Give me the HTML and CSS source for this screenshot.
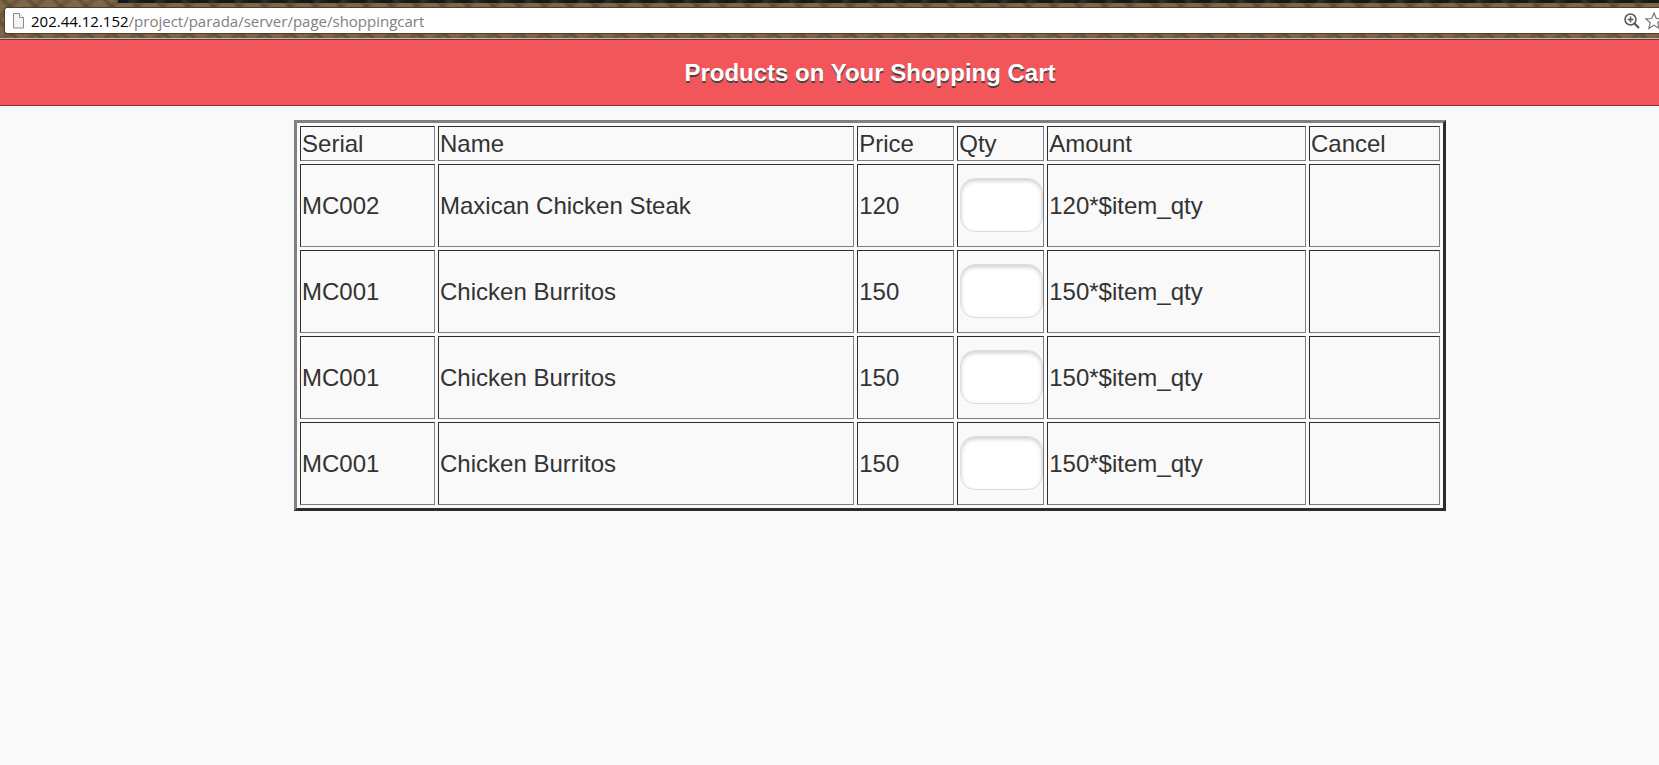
FILE: index.html
```html
<!DOCTYPE html>
<html lang="en">
<head>
<meta charset="utf-8">
<title>Shopping Cart</title>
<link rel="stylesheet" href="styles.css">
</head>
<body>
<div class="toolbar">
  <div class="tabstrip"></div>
  <div class="omnibox">
    <svg class="page-icon" width="13" height="16" viewBox="0 0 13 16"><path d="M1.500 .5h6l4 4v10.500h-10z" fill="#f4f4f4" stroke="#8c8c8c"/><path d="M7.500 .5v4h4" fill="#fff" stroke="#8c8c8c"/></svg>
    <div class="url"><span class="host">202.44.12.152</span>/project/parada/server/page/shoppingcart</div>
    <button class="tool" aria-label="Zoom"><svg width="16" height="16" viewBox="0 0 16 16" fill="none" stroke="#555"><circle cx="6.500" cy="6.500" r="5.500" stroke-width="1.500"/><path d="M3.500 6.500h6M6.500 3.500v6" stroke-width="1.500"/><path d="M10.500 10.500l4.500 4.500" stroke-width="2.200"/></svg></button>
    <button class="tool star" aria-label="Bookmark"><svg width="18" height="18" viewBox="0 0 18 18" fill="none" stroke="#777" stroke-width="1.200"><path d="M9 1l2.300 5.500 6 .4-4.600 3.800 1.500 5.800L9 13.300l-5.200 3.200 1.500-5.800L.7 6.900l6-.4z"/></svg></button>
  </div>
</div>
<header class="header"><h1>Products on Your Shopping Cart</h1></header>
<main class="content">
  <table class="cart">
    <colgroup><col class="c-serial"><col class="c-name"><col class="c-price"><col class="c-qty"><col class="c-amount"><col class="c-cancel"></colgroup>
    <thead><tr><th>Serial</th><th>Name</th><th>Price</th><th>Qty</th><th>Amount</th><th>Cancel</th></tr></thead>
    <tbody>
      <tr><td>MC002</td><td>Maxican Chicken Steak</td><td>120</td><td class="qty-cell"><input class="qty" type="text" aria-label="Quantity, row 1"></td><td>120*$item_qty</td><td></td></tr>
      <tr><td>MC001</td><td>Chicken Burritos</td><td>150</td><td class="qty-cell"><input class="qty" type="text" aria-label="Quantity, row 2"></td><td>150*$item_qty</td><td></td></tr>
      <tr><td>MC001</td><td>Chicken Burritos</td><td>150</td><td class="qty-cell"><input class="qty" type="text" aria-label="Quantity, row 3"></td><td>150*$item_qty</td><td></td></tr>
      <tr><td>MC001</td><td>Chicken Burritos</td><td>150</td><td class="qty-cell"><input class="qty" type="text" aria-label="Quantity, row 4"></td><td>150*$item_qty</td><td></td></tr>
    </tbody>
  </table>
</main>
</body>
</html>
```
FILE: styles.css
```css
* { box-sizing: border-box; }
body {
  margin: 0;
  background: #f9f9f9;
  color: #333;
  font-family: "Liberation Sans", Arial, sans-serif;
  font-size: 24px;
  overflow-x: hidden;
}
.toolbar {
  background:
    repeating-linear-gradient(45deg, transparent 0 9px, rgba(60, 45, 25, .35) 11px 13px, transparent 15px 18px),
    repeating-linear-gradient(135deg, #7d6748 0 8px, #6b573b 11px 13px, #7d6748 16px 18px);
  border-bottom: 1px solid #733;
  box-shadow: inset 0 -1px #bbb;
  padding-bottom: 5px;
}
.tabstrip {
  height: 3px;
  margin: 0 0 4px 118px;
  background: repeating-linear-gradient(100deg, #15191a 0 9px, #2b3233 14px, #1b1f1c 21px, #15191a 26px);
}
.omnibox {
  display: flex;
  align-items: center;
  height: 27px;
  margin-left: 4px;
  padding-left: 7px;
  background: #fff;
  border: 1px solid #4c3e2b;
  border-right: 0;
  border-radius: 3px 0 0 3px;
}
.page-icon { flex: none; }
.url {
  flex: 1;
  margin-left: 6px;
  color: #808080;
  font: 15px/24px "Open Sans", "Noto Sans", sans-serif;
}
.host { color: #000; }
.tool { flex: none; display: flex; margin: 0 5px 0 0; padding: 0; border: 0; background: none; }
.star { margin: 0 -4px 0 0; }
.header {
  height: 66px;
  padding-left: 81px;
  background: #f2555a;
  border-bottom: 1px solid #8d2f3a;
  text-align: center;
}
.header h1 {
  margin: 0;
  color: #fff;
  font-size: 24px;
  line-height: 66px;
  text-shadow: 0 2px 0 #444;
}
.content { padding: 14px 0 0 81px; }
.cart {
  width: 73%;
  margin: 0 auto;
  table-layout: fixed;
  border: 3px solid;
  border-color: #808080 #2c2c2c #2c2c2c #808080;
  border-spacing: 3px;
}
.c-serial { width: 12%; }
.c-name { width: 37%; }
.c-price { width: 97px; }
.c-qty { width: 87px; }
.c-amount { width: 23%; }
.cart th, .cart td {
  padding: 1px;
  border: 1px solid;
  border-color: #2c2c2c #808080 #808080 #2c2c2c;
  font-weight: normal;
  text-align: left;
  line-height: 31px;
}
.cart td { height: 83px; }
.cart .qty-cell { padding: 0 0 2px 2px; }
.qty {
  display: block;
  width: 100%;
  height: 54px;
  padding: 6px;
  border: 1px solid #ddd;
  border-radius: 15px;
  background: #fff;
  box-shadow: inset 0 2px 4px rgba(0, 0, 0, .2);
  color: #333;
  font: inherit;
}
```
